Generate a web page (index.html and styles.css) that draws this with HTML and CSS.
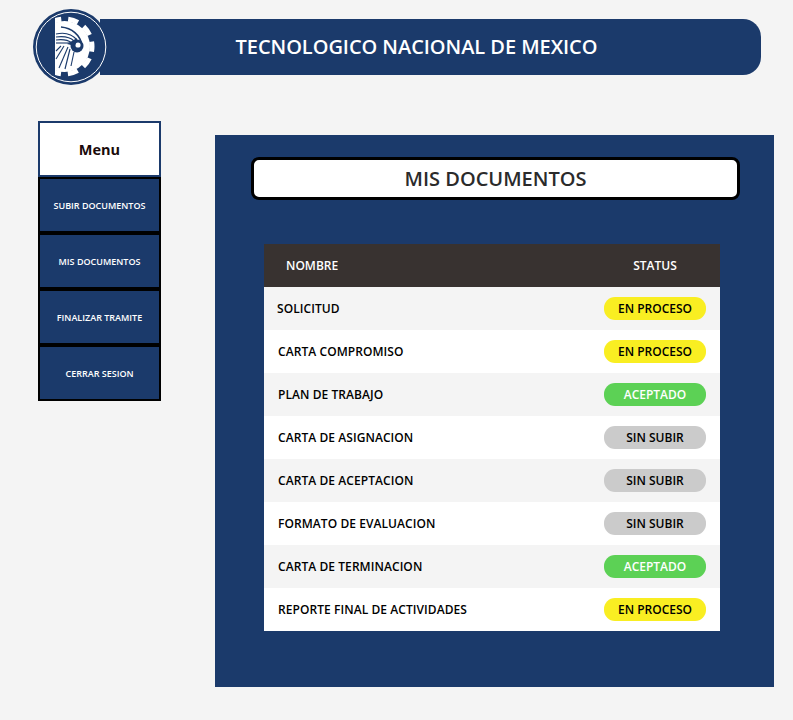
FILE: index.html
```html
<!DOCTYPE html>
<html lang="es">
<head>
<meta charset="utf-8">
<title>Mis documentos</title>
<link rel="stylesheet" href="styles.css">
</head>
<body>
<header class="header">
  <svg class="logo" viewBox="0 0 79 78" width="79" height="78" aria-hidden="true">
    <defs><clipPath id="cut"><rect x="23" y="0" width="56" height="78"/></clipPath></defs>
    <circle cx="39" cy="38" r="38" fill="#1b3a6b"/>
    <circle cx="39" cy="38" r="34.8" fill="none" stroke="#fff" stroke-width="1"/>
    <g clip-path="url(#cut)">
      <circle cx="32.5" cy="37.5" r="25.5" fill="#fff"/>
      <circle cx="32.5" cy="37.5" r="27.5" fill="none" stroke="#fff" stroke-width="5" stroke-dasharray="10.3 6.98" stroke-dashoffset="5.15"/>
    </g>
    <g fill="none" stroke="#1b3a6b" stroke-width="1.1">
      <path d="M29 18C40 19 48 26 50 36" stroke-width="1.6"/>
      <path d="M24 25C33 23 40 25 45 31"/>
      <path d="M24 28C32 27 38 28 42 32"/>
      <path d="M24 31C31 30 36 31 40 34"/>
      <path d="M24 34H38"/>
      <path d="M36 38L27 59"/>
      <path d="M38 40L33 60"/>
      <path d="M32 37L24 50"/>
      <path d="M42 43L39 57"/>
      <path d="M29 37L24 42"/>
    </g>
    <circle cx="45" cy="37" r="6.5" fill="#1b3a6b"/>
    <circle cx="46" cy="36" r="2.6" fill="#fff"/>
    <path d="M35 35L45 29L43 37Z" fill="#1b3a6b"/>
  </svg>
  <h1 class="header-title">TECNOLOGICO NACIONAL DE MEXICO</h1>
</header>
<div class="content">
  <nav class="sidebar">
    <div class="menu-title">Menu</div>
    <a class="menu-item">SUBIR DOCUMENTOS</a>
    <a class="menu-item">MIS DOCUMENTOS</a>
    <a class="menu-item">FINALIZAR TRAMITE</a>
    <a class="menu-item">CERRAR SESION</a>
  </nav>
  <main class="panel">
    <h2 class="panel-title">MIS DOCUMENTOS</h2>
    <table class="docs">
      <thead>
        <tr><th class="col-name">NOMBRE</th><th class="col-status">STATUS</th></tr>
      </thead>
      <tbody>
        <tr><td><span class="first-label">SOLICITUD</span></td><td><span class="pill pill-progress">EN PROCESO</span></td></tr>
        <tr><td>CARTA COMPROMISO</td><td><span class="pill pill-progress">EN PROCESO</span></td></tr>
        <tr><td>PLAN DE TRABAJO</td><td><span class="pill pill-ok">ACEPTADO</span></td></tr>
        <tr><td>CARTA DE ASIGNACION</td><td><span class="pill pill-none">SIN SUBIR</span></td></tr>
        <tr><td>CARTA DE ACEPTACION</td><td><span class="pill pill-none">SIN SUBIR</span></td></tr>
        <tr><td>FORMATO DE EVALUACION</td><td><span class="pill pill-none">SIN SUBIR</span></td></tr>
        <tr><td>CARTA DE TERMINACION</td><td><span class="pill pill-ok">ACEPTADO</span></td></tr>
        <tr><td>REPORTE FINAL DE ACTIVIDADES</td><td><span class="pill pill-progress">EN PROCESO</span></td></tr>
      </tbody>
    </table>
  </main>
</div>
</body>
</html>
```
FILE: styles.css
```css
* { box-sizing: border-box; }
html, body { margin: 0; padding: 0; }
body {
  background: #f4f4f4;
  font-family: "Open Sans", "Noto Sans", sans-serif;
  height: 720px;
  overflow: hidden;
}
.header {
  position: relative;
  margin: 19px 32px 0 100px;
  height: 56px;
  background: #1b3a6b;
  border-radius: 0 18px 18px 0;
  display: flex;
  align-items: center;
  justify-content: center;
  padding-right: 28px;
}
.logo { position: absolute; left: -68px; top: -10px; }
.header-title {
  margin: 0;
  color: #fff;
  font-size: 20px;
  font-weight: 600;
  letter-spacing: -0.05px;
  line-height: 1;
}
.content {
  display: flex;
  align-items: flex-start;
  padding-left: 38px;
  margin-top: 46px;
}
.sidebar { width: 123px; margin-right: 54px; }
.menu-title {
  height: 56px;
  background: #fff;
  border: 2px solid #1b3a6b;
  display: flex;
  align-items: center;
  justify-content: center;
  font-size: 14.5px;
  font-weight: 700;
  color: #1a0a0a;
}
.menu-item {
  height: 56px;
  background: #1b3a6b;
  border: 2px solid #000;
  display: flex;
  align-items: center;
  justify-content: center;
  color: #fff;
  font-size: 9px;
  font-weight: 600;
}
.panel {
  width: 559px;
  height: 552px;
  margin-top: 14px;
  background: #1b3a6b;
  padding: 22px 34px 0 36px;
}
.panel-title {
  margin: 0;
  width: 489px;
  height: 43px;
  background: #fff;
  border: 3px solid #000;
  border-radius: 8px;
  display: flex;
  align-items: center;
  justify-content: center;
  font-size: 20px;
  font-weight: 600;
  color: #2b2b2b;
}
.docs {
  width: 456px;
  margin: 44px 0 0 13px;
  border-collapse: collapse;
  background: #fff;
  font-size: 12px;
  font-weight: 600;
}
.docs th {
  height: 43px;
  background: #383230;
  color: #fff;
  font-weight: 600;
  padding: 0;
  text-align: left;
}
.docs .col-name { padding-left: 22px; }
.docs .col-status { width: 130px; text-align: center; }
.docs td {
  height: 43px;
  padding: 0 0 0 14px;
  color: #000;
  letter-spacing: 0.07px;
}
.docs td:last-child { padding: 0 14px 0 0; width: 130px; text-align: right; letter-spacing: 0; }
.docs tbody tr:nth-child(odd) { background: #f4f4f4; }
.first-label { display: inline-block; margin: -2px 0 0 -1px; vertical-align: middle; }
.pill {
  display: inline-block;
  width: 102px;
  height: 23px;
  line-height: 23px;
  border-radius: 11px;
  text-align: center;
  vertical-align: middle;
}
.pill-progress { background: #f9ee22; color: #000; }
.pill-ok { background: #5cd155; color: #fff; }
.pill-none { background: #cbcbcb; color: #000; }
```
